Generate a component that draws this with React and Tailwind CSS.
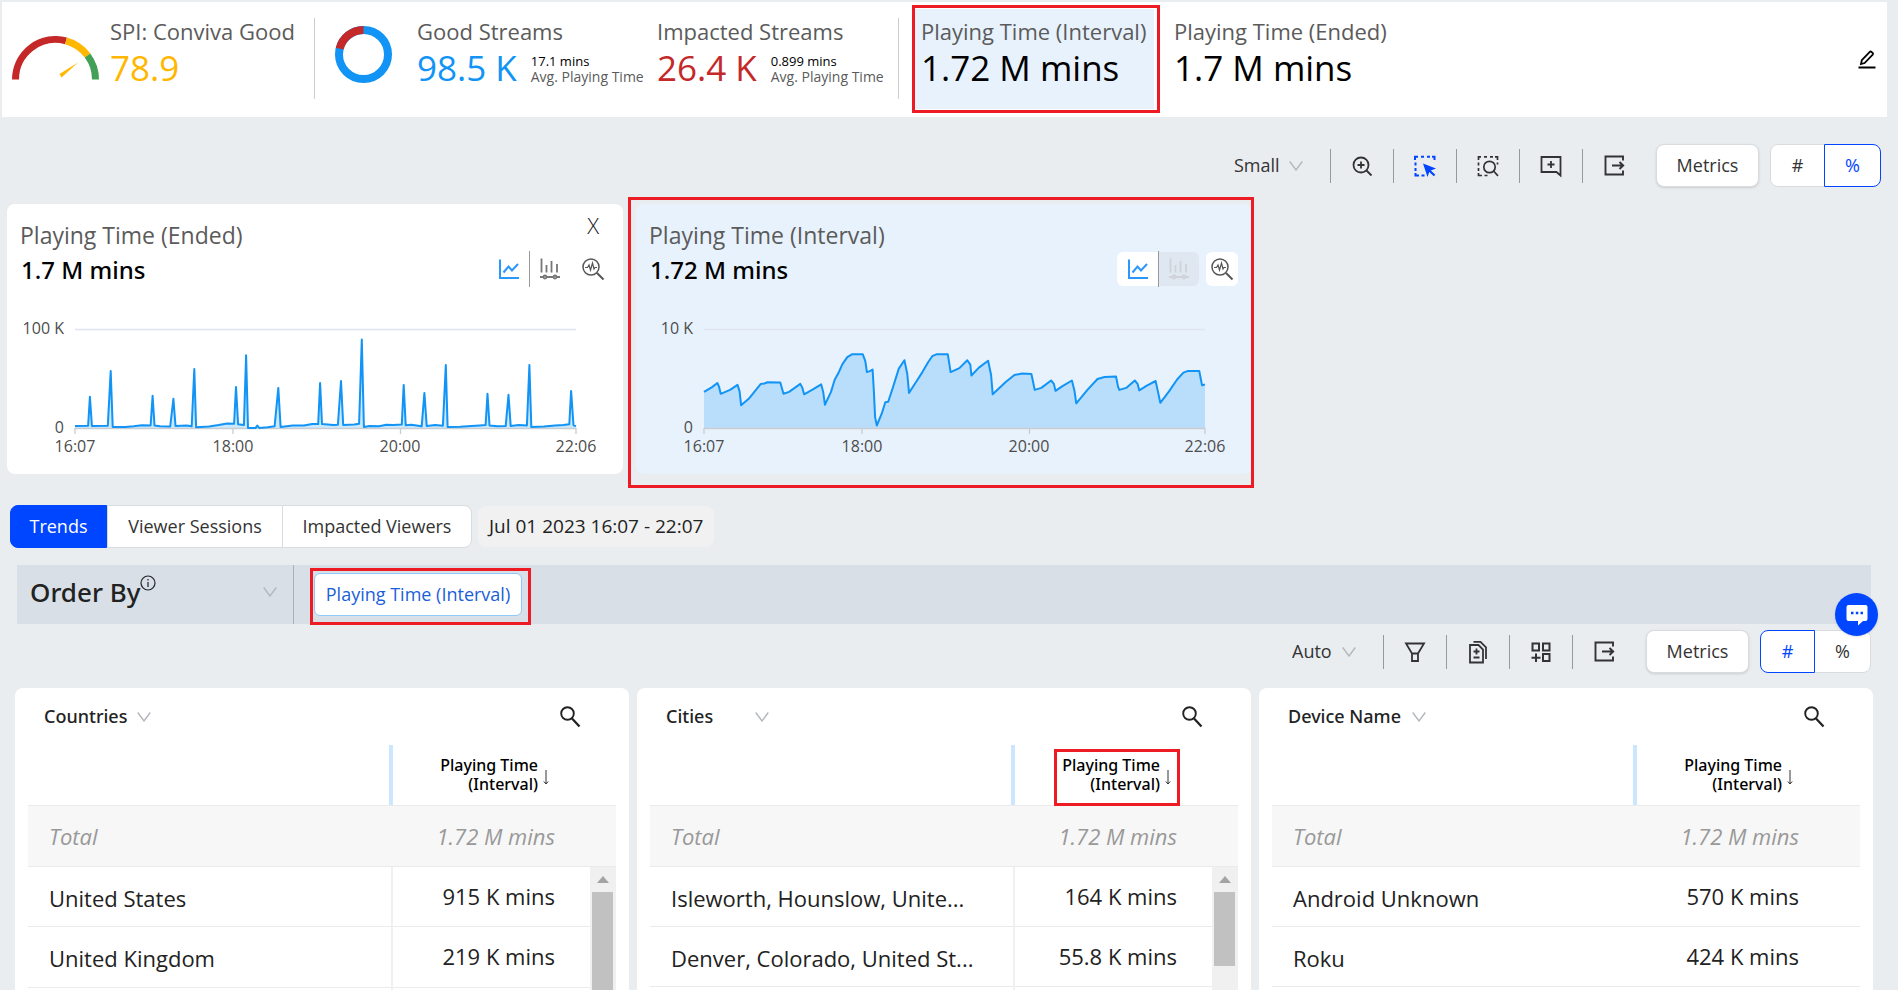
import { useState } from 'react'

const endedSeries = [
  [0, 2.4], [9.4, 2.8], [10.7, 32], [12.1, 2.6], [23.5, 2.8], [25.6, 58], [27, 1.6], [36, 1.6], [42, 2.2], [48, 3.2], [54.2, 3],
  [55.6, 33], [57, 3], [61, 2.2], [68.2, 2], [70.5, 30], [72, 2.6], [80, 3], [83.6, 2.2], [85.5, 60], [86.8, 1.2], [96, 2],
  [103, 3.4], [109, 5.2], [114, 4.8], [115.4, 42], [116.9, 4.2], [121, 3.4], [122.6, 74], [124, 0.6], [129.5, 0.6], [130.6, 3],
  [132, 0.6], [138, 1.2], [143, 2.2], [145.7, 41], [147.3, 1.6], [156, 3], [164, 3], [170, 4.6], [174.3, 4.4], [175.6, 46],
  [177, 4.4], [185, 3.6], [188.4, 3.8], [190.6, 48], [192.2, 3.6], [200, 4], [203.6, 4.8], [205.5, 90], [207, 1.6], [211, 2.6],
  [218, 2.2], [223, 3.8], [228, 3.4], [234.2, 4], [235.5, 44], [237, 3.2], [241, 3.8], [248.4, 2.2], [250.4, 36], [252, 2.6],
  [258, 3.4], [263.6, 2.8], [265.7, 64], [267, 1.6], [276, 1.8], [284, 2.4], [290, 3], [294.2, 3.4], [295.6, 35], [297, 3],
  [303, 2.2], [308.6, 2.6], [310.6, 34], [312.2, 2.4], [318, 3.4], [323.8, 3], [325.6, 64], [327, 1.6], [336, 2], [344, 3],
  [350, 3.4], [354.2, 4.2], [355.5, 38], [357.2, 3.2], [359, 2.4],
]

const intervalSeries = [
  [0, 3.7], [5.5, 4.15], [9.6, 4.6], [10.8, 4.2], [12, 3.5], [18.7, 3.9], [24, 4.4], [25.5, 3.75], [26.6, 2.35], [32, 3],
  [40.7, 4.5], [43.3, 4.55], [45.6, 4.67], [54.7, 4.65], [57, 3.5], [61, 3.7], [69, 4.5], [70.5, 4.1], [71.7, 3.45], [78, 3.95],
  [84, 4.45], [85.4, 3.7], [86.6, 2.4], [91, 3.7], [93.6, 4.9], [96.3, 5.6], [99.2, 6.5], [102.7, 7.2], [106, 7.5], [113.8, 7.5],
  [115.6, 6.8], [116.7, 5.7], [118.8, 5.8], [120.8, 5.95], [121.7, 3.9], [122.6, 1.15], [123.8, 0.3], [127.3, 1.5], [129.9, 2.65],
  [132, 2.7], [135.5, 4.2], [139.6, 6.05], [143.6, 6.9], [145.7, 5.5], [146.9, 3.6], [151.5, 4.6], [156.5, 5.7], [160.6, 6.7],
  [163.5, 7.3], [166.5, 7.5], [174.7, 7.5], [175.8, 6.55], [176.7, 5.7], [183, 6.1], [188.7, 6.9], [190.8, 6.45], [191.6, 5.35],
  [197, 6.15], [203.6, 6.85], [205.7, 5.4], [206.9, 3.45], [216.2, 4.7], [222.4, 5.4], [228, 5.55], [234.6, 5.5], [235.8, 4.7],
  [237, 3.9], [241.7, 4.1], [248.7, 4.85], [250.7, 4.5], [251.9, 3.8], [256.6, 4.25], [263.6, 4.85], [265.4, 3.85], [266.8, 2.55],
  [274.7, 3.9], [282, 5], [287, 5.2], [295.2, 5.25], [296.7, 4.2], [297.6, 3.9], [302.5, 4.1], [308.7, 4.85], [310.7, 4.5],
  [311.9, 3.85], [317, 4.3], [323.6, 4.8], [325.3, 3.7], [327, 2.6], [333.2, 3.75], [339, 4.95], [343.5, 5.65], [346.4, 5.8],
  [354.9, 5.8], [356, 5], [356.9, 4.35], [359, 4.45],
]

const tables = [
  {
    name: 'Countries', width: 'w-[107px]', scroll: 'full',
    rows: [['United States', '915 K mins'], ['United Kingdom', '219 K mins']],
  },
  {
    name: 'Cities', width: 'w-[103px]', scroll: 'short', marked: true,
    rows: [['Isleworth, Hounslow, Unite...', '164 K mins'], ['Denver, Colorado, United St...', '55.8 K mins']],
  },
  {
    name: 'Device Name', width: 'w-[138px]', scroll: null,
    rows: [['Android Unknown', '570 K mins'], ['Roku', '424 K mins']],
  },
]

function Svg({ children, className = 'size-6', sw = 1.8 }) {
  return (
    <svg viewBox="0 0 24 24" className={className} fill="none" stroke="currentColor" strokeWidth={sw} aria-hidden="true">
      {children}
    </svg>
  )
}

const ZoomInIcon = () => (
  <Svg><circle cx="11" cy="11" r="7.5" /><path d="M16.5 16.5l5 5M11 7.5v7M7.5 11h7" /></Svg>
)
const SelectIcon = () => (
  <Svg sw={2}>
    <path d="M2 6V2.8h3M8 2.8h3M14 2.8h3M19 2.8h2.5V6M2.5 8.5v3M2.5 14v3M2.5 19v2.5H6M8.5 21.5h3" />
    <path d="M10 9.5l13 5-5.2 2 4.5 4.3-1.5 1.5-4.5-4.3-1.8 5z" fill="currentColor" stroke="none" />
  </Svg>
)
const AreaSearchIcon = () => (
  <Svg sw={1.7}>
    <path d="M2.5 6V2.8H5M8 2.8h3M14 2.8h3M19 2.8h2.5V6M21.5 8.5v2M2.5 8.5v3M2.5 14v3M2.5 19v2.5H6M8.5 21.5h3" />
    <circle cx="13.5" cy="13" r="5.7" /><path d="M17.5 17l4.5 4.8" />
  </Svg>
)
const NoteIcon = () => (
  <Svg><path d="M2.5 3h19v18.5l-4-3.5h-15zM12 7v7M8.5 10.5h7" /></Svg>
)
const ExportIcon = () => (
  <Svg sw={1.9}><path d="M21 6.5V2.5H3.5v18H21v-4M10 11.5h11M17.5 8l3.7 3.5-3.7 3.5" /></Svg>
)
const FilterIcon = () => (
  <Svg><path d="M3 3.5h18l-6 10v7.5H9v-7.5zM9 13.5h6" /></Svg>
)
const DocIcon = () => (
  <Svg><path d="M4 5h8.5l4.5 4.5V22.5H4zM7.5 1.8h7l5.5 5.5V19M7.5 11.5h6M10.5 8.5v6M7.5 17.5h6" /></Svg>
)
const GridIcon = () => (
  <Svg sw={2}><path d="M3.5 3.5h6.5v7H3.5zM14 3.5h6.5v7H14zM14 14h6.5v7H14zM7 13.5v8.5M2.5 17.7h9" /></Svg>
)
const LineIcon = () => (
  <Svg sw={2}><path d="M3 2.5v18.5h19M6.5 15.5l5-6 3.5 4 6-6.5" /></Svg>
)
const BarsIcon = () => (
  <Svg sw={1.8}>
    <path d="M3.5 1.5v14M8.5 8v7.5M13.5 4v11.5M19 7v8.5M2 20h4M9 20h6M18 20h4" />
    <circle cx="7" cy="20" r="1.5" /><circle cx="17" cy="20" r="1.5" />
  </Svg>
)
const InspectIcon = () => (
  <Svg sw={1.5}>
    <circle cx="10" cy="10" r="8" /><path d="M16 16l6.5 6.5" strokeWidth="2" />
    <path d="M4 10.5h2.5l1.5-2.5 1.5 5 2-7 1.5 6 1-1.5h2" strokeWidth="1.2" />
  </Svg>
)
const SearchIcon = () => (
  <Svg sw={1.9}><circle cx="9.5" cy="8.5" r="6.3" /><path d="M14 13.5l7.5 8" strokeWidth="2.3" /></Svg>
)

function Chevron() {
  return (
    <svg viewBox="0 0 14 10" className="h-[10px] w-[14px] shrink-0" fill="none" stroke="#b3b8bd" strokeWidth="1.4" aria-hidden="true">
      <path d="M.7 .5l6.3 8.5 6.3-8.5" />
    </svg>
  )
}

function Picker({ label, value, className }) {
  return (
    <div className={`relative flex items-center ${className}`}>
      <select aria-label={label} className="w-full appearance-none bg-transparent outline-none">
        <option>{value}</option>
      </select>
      <span className="pointer-events-none absolute right-0"><Chevron /></span>
    </div>
  )
}

// red callout drawn on top of a relative parent
function Callout({ className }) {
  return <div className={`pointer-events-none absolute z-10 border-3 border-[#ed1c24] ${className}`} />
}

function Gauge() {
  return (
    <svg viewBox="0 0 87 44" className="mt-[27px] h-[44px] w-[87px] shrink-0" fill="none" strokeWidth="7" aria-hidden="true">
      <path d="M3.5 43.5A40 40 0 0 1 54 4.9" stroke="#c42828" />
      <path d="M54 4.9A40 40 0 0 1 75.5 19.5" stroke="#ffb700" />
      <path d="M75.5 19.5A40 40 0 0 1 83.5 43.5" stroke="#43a057" />
      <path d="M47.5 38l18.5-11.5-16.5 15z" fill="#ffb700" stroke="none" />
    </svg>
  )
}

function Donut() {
  return (
    <svg viewBox="0 0 57 57" className="ml-5 mt-[17px] size-[57px] shrink-0" fill="none" strokeWidth="8" aria-hidden="true">
      <circle cx="28.5" cy="28.5" r="24.5" stroke="#1194f6" />
      <path d="M4.7 22.6A24.5 24.5 0 0 1 28.5 4" stroke="#c42828" />
    </svg>
  )
}

function Stat({ title, value, color = 'text-black', note, className = '' }) {
  return (
    <div className={`shrink-0 whitespace-nowrap pt-2 ${className}`}>
      <div className="text-[22px] leading-[28px] text-[#5b5b5b]">{title}</div>
      <div className="flex gap-[14px]">
        <div className={`text-[35px] leading-[46px] ${color}`}>{value}</div>
        {note && (
          <div className="mt-2 text-[14px] leading-[16px]">
            <div className="text-[13px] text-black">{note}</div>
            <div className="text-[#5b5b5b]">Avg. Playing Time</div>
          </div>
        )}
      </div>
    </div>
  )
}

function Chart({ data, max, top, title }) {
  const x = m => 68 + (m / 359) * 501
  const y = v => 140.5 - (v / max) * 99
  const line = data.map(([m, v], i) => `${i ? 'L' : 'M'}${x(m).toFixed(1)} ${y(v).toFixed(1)}`).join('')
  return (
    <svg viewBox="0 0 616 186" className="block w-full" role="img" aria-label={title}>
      <path d="M68 41.5h501" stroke="#dfe4ee" strokeWidth="1.5" />
      <path d={`${line}L569 140.5L68 140.5Z`} fill="#1194f6" fillOpacity=".22" />
      <path d="M68 146v-5.5h501v5.5M226 140.5v5.5M393.5 140.5v5.5" fill="none" stroke="#c9cdd1" strokeWidth="1.3" />
      <path d={line} fill="none" stroke="#1194f6" strokeWidth="2" strokeLinejoin="round" />
      <g fontSize="16" fill="#4d4d4d">
        <text x="57" y="46" textAnchor="end">{top}</text>
        <text x="57" y="145" textAnchor="end">0</text>
        <g textAnchor="middle">
          <text x="68" y="164">16:07</text>
          <text x="226" y="164">18:00</text>
          <text x="393" y="164">20:00</text>
          <text x="569" y="164">22:06</text>
        </g>
      </g>
    </svg>
  )
}

function ChartCard({ title, value, data, max, top, active }) {
  return (
    <section className={`relative rounded-lg pt-[14px] ${active ? 'bg-[#e8f2fd]' : 'bg-white'}`}>
      <h2 className="pl-[13px] text-[23px] leading-[35px] text-[#5b5b5b]">{title}</h2>
      <div className="flex h-[35px] items-start justify-between px-[14px]">
        <div className="font-['Noto_Sans',sans-serif] text-[24px] leading-[34px] font-medium text-black">{value}</div>
        <div className="flex h-8 items-center text-[#555]">
          <button aria-label="Line chart" className={`grid h-[34px] w-[41px] place-items-center rounded-l-md text-[#2b96fb] ${active ? 'bg-white' : ''}`}><LineIcon /></button>
          <span className="h-9 w-px bg-[#999]" />
          <button aria-label="Bar chart" disabled={active} className={`grid h-[34px] w-10 place-items-center rounded-r-md ${active ? 'bg-[#dfe7f1] text-[#cfd3d9]' : 'text-[#777]'}`}><BarsIcon /></button>
          <button aria-label="Diagnose" className={`ml-[7px] grid h-[34px] w-8 place-items-center rounded-md ${active ? 'bg-white' : ''}`}><InspectIcon /></button>
        </div>
      </div>
      <Chart data={data} max={max} top={top} title={title} />
      {!active && <button aria-label="Close" className="absolute right-6 top-2 text-[22px] leading-[26px] font-light text-[#222]">X</button>}
      {active && <Callout className="-bottom-[14px] -left-2 -right-[2px] -top-[7px]" />}
    </section>
  )
}

function Toolbar({ size, value, pickerWidth, tools, unit, setUnit, className }) {
  const on = 'z-1 border-[#0045ff] text-[#0045ff]'
  const off = 'border-[#d9dcdf] text-[#333]'
  return (
    <div className={`flex h-[43px] items-center justify-end text-[18px] text-[#333] ${className}`}>
      <Picker label={size} value={value} className={`mr-[27px] ${pickerWidth}`} />
      {tools.map(([label, Icon, color]) => (
        <div key={label} className="flex h-[34px] w-[63px] items-center justify-center border-l border-[#999]">
          <button aria-label={label} className={color}><Icon /></button>
        </div>
      ))}
      <button className="mx-[11px] h-[43px] w-[103px] rounded-lg border border-[#d9dcdf] bg-white shadow-sm">Metrics</button>
      <div className="flex">
        <button onClick={() => setUnit('#')} className={`relative h-[43px] w-[55px] rounded-l-lg border bg-white ${unit === '#' ? on : off}`}>#</button>
        <button onClick={() => setUnit('%')} className={`relative -ml-px h-[43px] w-[57px] rounded-r-lg border bg-white ${unit === '%' ? on : off}`}>%</button>
      </div>
    </div>
  )
}

function TableCard({ name, width, scroll, marked, rows }) {
  const line = 'border-b border-[#ebebeb]'
  const split = scroll ? 'border-r-2 border-r-[#f0f0f0]' : ''
  return (
    <section className="overflow-hidden rounded-t-lg bg-white px-[13px]">
      <div className="flex h-[57px] items-center justify-between pl-4 pr-[34px] font-['Noto_Sans',sans-serif] text-[18px] font-medium text-[#222]">
        <Picker label="Dimension" value={name} className={width} />
        <button aria-label={`Search ${name}`} className="text-[#222]"><SearchIcon /></button>
      </div>
      <table className="w-full table-fixed border-separate border-spacing-0">
        <colgroup><col className="w-[62%]" /><col /><col className="w-[26px]" /></colgroup>
        <thead>
          <tr className="h-[61px]">
            <th className={`relative ${line}`}>
              <span className="absolute right-0 top-0 h-[60px] w-1 bg-[#cce6ff]" />
            </th>
            <th colSpan={2} className={`pr-[67px] ${line}`}>
              <button className="relative ml-auto flex items-center gap-[5px] text-right font-['Noto_Sans',sans-serif] text-[16px] font-medium leading-[19px] text-black">
                <span>Playing Time<br />(Interval)</span>
                <svg viewBox="0 0 6 16" className="mt-1 h-[16px] w-[6px]" fill="none" stroke="#333" aria-hidden="true"><path d="M3 1v14M.8 12.5L3 15l2.200-2.500" /></svg>
                {marked && <Callout className="-bottom-3 -left-2 -right-[9px] -top-[7px]" />}
              </button>
            </th>
          </tr>
        </thead>
        <tbody className="text-[22px] text-[#222]">
          <tr className="h-[61px] bg-[#f7f7f7] italic text-[#999]">
            <td className={`pl-[21px] ${line}`}>Total</td>
            <td colSpan={2} className={`pr-[61px] text-right ${line}`}>1.72 M mins</td>
          </tr>
          {[...rows, ['', '']].map(([k, v], i) => (
            <tr key={k} className="h-[60px]">
              <td className={`relative truncate pl-[21px] pt-[3px] ${line} ${split}`}>
                {k}
                {scroll === 'full' && <span className={`absolute bottom-0 -right-px w-px bg-[#b0b0b0] ${i ? 'top-0' : 'top-[25px]'}`} />}
              </td>
              <td className={`pr-[35px] text-right ${line}`}>{v}</td>
              {!scroll && <td className={line} />}
              {scroll && i === 0 && (
                <td rowSpan={3} className="bg-[#f0f0f0] p-0 align-top">
                  <div className="flex flex-col items-center">
                    <svg viewBox="0 0 12 7" className="my-[9px] h-[7px] w-3" fill="#a3a3a3" aria-hidden="true"><path d="M6 0l6 7H0z" /></svg>
                    <div className={`w-[21px] bg-[#c1c1c1] ${scroll === 'full' ? 'h-[156px]' : 'h-[74px]'}`} />
                  </div>
                </td>
              )}
            </tr>
          ))}
        </tbody>
      </table>
    </section>
  )
}

export default function App() {
  const [tab, setTab] = useState('Trends')
  const [chartUnit, setChartUnit] = useState('%')
  const [tableUnit, setTableUnit] = useState('#')

  return (
    <div className="flex h-screen flex-col overflow-hidden bg-[#e9edf0] font-['Open_Sans','Noto_Sans',sans-serif]">
      <header className="ml-0.5 mr-[11px] mt-0.5 flex h-[115px] shrink-0 items-start bg-white pl-[10px] pt-[7px]">
        <Gauge />
        <Stat title="SPI: Conviva Good" value="78.9" color="text-[#ffb700]" className="ml-[11px] w-[204px]" />
        <span className="mt-[9px] h-[81px] w-px bg-[#ccc]" />
        <Donut />
        <Stat title="Good Streams" value="98.5 K" color="text-[#1194f6]" note="17.1 mins" className="ml-[25px] w-[240px]" />
        <Stat title="Impacted Streams" value="26.4 K" color="text-[#c42828]" note="0.899 mins" className="w-[241px]" />
        <span className="mt-[9px] h-[81px] w-px bg-[#ccc]" />
        <div className="relative ml-4 h-[100px] w-[239px] shrink-0 bg-[#e8f2fd] pl-[6px]">
          <Stat title="Playing Time (Interval)" value="1.72 M mins" />
          <Callout className="-bottom-1 -left-[3px] -right-[6px] -top-1" />
        </div>
        <Stat title="Playing Time (Ended)" value="1.7 M mins" className="ml-5" />
        <button aria-label="Edit" className="ml-auto mr-[10px] mt-10 text-black">
          <svg viewBox="0 0 20 20" className="size-5" fill="none" stroke="currentColor" strokeWidth="1.8" aria-hidden="true">
            <path d="M4 15l.8-3.800L12.800 2.800q.8-.7 1.600 0l1.300 1.200q.8.800 0 1.600L7.600 14z" /><path d="M1.500 18.500h17" strokeWidth="2" />
          </svg>
        </button>
      </header>

      <Toolbar
        size="Chart size" value="Small" pickerWidth="w-[69px]" unit={chartUnit} setUnit={setChartUnit} className="mt-[27px] shrink-0 pr-[17px]"
        tools={[
          ['Zoom in', ZoomInIcon], ['Select', SelectIcon, 'text-[#0045ff]'], ['Zoom to area', AreaSearchIcon],
          ['Add note', NoteIcon], ['Export charts', ExportIcon],
        ]}
      />

      <div className="mt-[17px] grid shrink-0 grid-cols-3 gap-[13px] pl-[7px] pr-[17px]">
        <ChartCard title="Playing Time (Ended)" value="1.7 M mins" data={endedSeries} max={100} top="100 K" />
        <ChartCard title="Playing Time (Interval)" value="1.72 M mins" data={intervalSeries} max={10} top="10 K" active />
      </div>

      <div className="mt-[31px] flex shrink-0 items-center pl-[10px]">
        <div className="flex h-[43px] text-[18px]">
          {[
            ['Trends', 'w-[97px] rounded-l-lg'],
            ['Viewer Sessions', 'w-[175px] border-r-0'],
            ['Impacted Viewers', 'w-[190px] rounded-r-lg'],
          ].map(([t, w]) => (
            <button key={t} onClick={() => setTab(t)}
              className={`border ${w} ${tab === t ? 'border-[#0045ff] bg-[#0045ff] text-white' : 'border-[#d9dcdf] bg-white text-[#333]'}`}>
              {t}
            </button>
          ))}
        </div>
        <div className="ml-[6px] flex h-[41px] items-center rounded-lg bg-[#f1f1f1] px-[11px] text-[19px] text-[#222]">Jul 01 2023 16:07 - 22:07</div>
      </div>

      <div className="ml-[17px] mr-[27px] mt-[17px] flex h-[59px] shrink-0 items-center bg-[#d8dfe6]">
        <div className="flex h-full w-[277px] items-center justify-between border-r border-[#a9b0b6] pb-[5px] pl-[13px] pr-4">
          <h2 className="flex font-['Noto_Sans',sans-serif] text-[26px] leading-[36px] font-medium text-[#222]">
            Order By
            <svg viewBox="0 0 16 16" className="mt-px size-4" fill="none" stroke="#222" strokeWidth="1.2" aria-hidden="true">
              <circle cx="8" cy="8" r="7" /><path d="M8 7v5M8 4v1.5" />
            </svg>
          </h2>
          <button aria-label="Order by options"><Chevron /></button>
        </div>
        <div className="relative ml-5">
          <button className="h-[43px] w-[208px] rounded-md border border-[#90caf9] bg-white text-[18px] text-[#1a5fd8]">Playing Time (Interval)</button>
          <Callout className="-bottom-[9px] -left-1 -right-[9px] -top-[5px]" />
        </div>
      </div>

      <Toolbar
        size="Table size" value="Auto" pickerWidth="w-16" unit={tableUnit} setUnit={setTableUnit} className="mt-[6px] shrink-0 pr-[27px]"
        tools={[['Filter', FilterIcon], ['Compare', DocIcon], ['Add dimension', GridIcon], ['Export tables', ExportIcon]]}
      />

      <main className="mt-[15px] grid min-h-0 flex-1 grid-cols-3 gap-2 pl-[15px] pr-[25px]">
        {tables.map(t => <TableCard key={t.name} {...t} />)}
      </main>

      <button aria-label="Chat" className="fixed right-5 top-[593px] z-20 grid size-[43px] place-items-center rounded-full bg-[#0045ff] shadow-sm">
        <svg viewBox="0 0 24 22" className="h-[22px] w-6" aria-hidden="true">
          <path d="M3.5 1h17q2 0 2 2v12q0 2-2 2H18l-5 4.5V17H3.5q-2 0-2-2V3q0-2 2-2z" fill="#fff" />
          <path d="M6 7.8h2.5v2.5H6zM10.8 7.8h2.5v2.5h-2.500zM15.5 7.8H18v2.5h-2.5z" fill="#0045ff" />
        </svg>
      </button>
    </div>
  )
}
